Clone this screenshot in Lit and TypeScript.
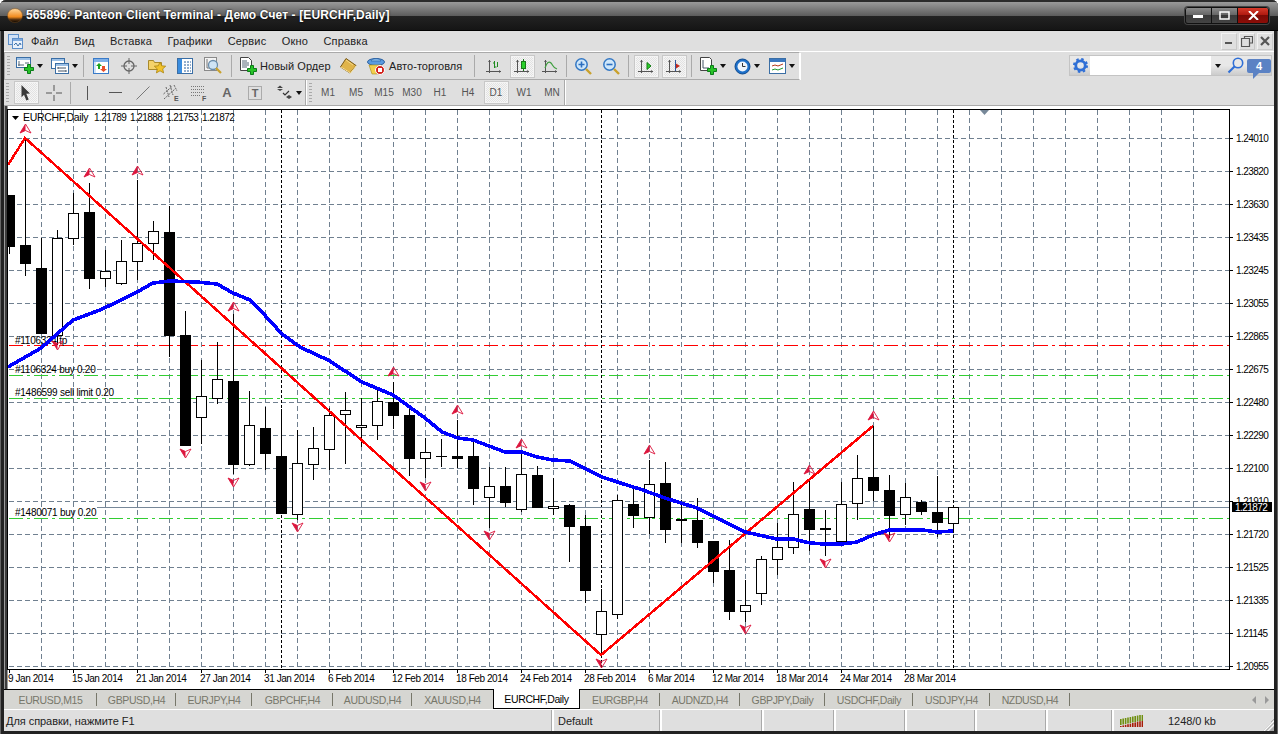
import { LitElement, html, css, svg } from "lit";
import { customElement } from "lit/decorators.js";

type C = [number, number, number, number, number, number];
// x, high, low, bodyTop, bodyBottom, white(1)/black(0)
const CANDLES: C[] = [
  [9,195,254,195,247,0],[25,138,276,245,264,0],[41,238,334,268,334,0],[57,230,345,238,335,1],[73,193,245,213,238,1],
  [89,183,289,212,279,0],[105,250,287,271,278,1],[121,240,285,261,283,1],[137,180,280,243,261,1],[153,221,260,231,243,1],
  [169,206,357,232,336,0],[185,311,446,335,446,0],[201,360,444,396,417,1],[217,342,404,379,398,1],[233,314,474,381,465,0],
  [249,391,466,425,464,1],[265,407,470,428,454,0],[281,409,514,456,514,0],[297,430,520,463,514,1],[313,427,480,448,464,1],
  [329,408,470,415,449,1],[345,392,464,410,414,1],[361,398,447,425,427,1],[377,390,440,401,425,1],[393,382,429,402,416,0],
  [409,405,476,415,459,0],[425,438,478,452,458,1],[441,439,467,456,457,0],[457,420,468,456,459,0],[473,441,505,456,489,0],
  [489,467,528,486,497,1],[505,467,507,486,503,0],[521,451,512,474,509,1],[537,466,508,475,508,0],[553,478,515,506,508,1],
  [569,504,562,505,527,0],[585,515,603,526,591,0],[601,589,655,611,634,1],[617,495,619,500,614,1],[633,489,528,504,516,0],
  [649,460,534,484,517,1],[665,462,543,483,530,0],[681,500,543,519,521,0],[697,498,548,520,543,0],[713,541,583,541,572,0],
  [729,540,620,570,612,0],[745,580,622,605,611,1],[761,556,605,559,593,1],[777,523,575,547,559,1],[793,482,554,514,547,1],
  [809,481,551,509,530,0],[825,510,556,528,530,0],[841,482,544,504,541,1],[857,455,520,478,503,1],[873,426,501,477,491,0],
  [889,475,538,490,516,0],[905,483,525,497,514,1],[921,500,515,502,512,0],[937,476,537,512,523,0],[953,507,531,507,523,1],
];
const BLUE = "8,367 41,348 73,320 100,310 117,302 137,292 153,283 170,281 197,282 217,284 233,293 250,300 260,310 282,334 300,347 317,355 328,360 362,382 393,395 425,418 442,432 458,438 473,440 505,452 522,452 537,457 553,460 570,461 602,477 633,487 640,489 665,498 697,508 715,517 745,532 777,539 793,539 810,543 825,544 842,544 857,542 873,535 889,530 923,530 937,532 953,531";
const UPS = [[25,129],[89,173],[137,171],[233,307],[393,372],[457,410],[521,444],[649,450],[809,470],[873,416]];
const DOWNS = [[57,345],[185,453],[233,482],[297,527],[425,486],[489,535],[601,663],[745,629],[825,563],[889,537]];
const PRICES = ["1.24010","1.23820","1.23630","1.23435","1.23245","1.23055","1.22865","1.22675","1.22480","1.22290","1.22100","1.21910","1.21720","1.21525","1.21335","1.21145","1.20955"];
const DATES = ["9 Jan 2014","15 Jan 2014","21 Jan 2014","27 Jan 2014","31 Jan 2014","6 Feb 2014","12 Feb 2014","18 Feb 2014","24 Feb 2014","28 Feb 2014","6 Mar 2014","12 Mar 2014","18 Mar 2014","24 Mar 2014","28 Mar 2014"];
const TABS = ["EURUSD,M15","GBPUSD,H4","EURJPY,H4","GBPCHF,H4","AUDUSD,H4","XAUUSD,H4","EURCHF,Daily","EURGBP,H4","AUDNZD,H4","GBPJPY,Daily","USDCHF,Daily","USDJPY,H4","NZDUSD,H4"];
const MENU = ["Файл","Вид","Вставка","Графики","Сервис","Окно","Справка"];
const TF = ["M1","M5","M15","M30","H1","H4","D1","W1","MN"];

const range = (n: number) => Array.from({ length: n }, (_, i) => i);

const plus = (x = 0, y = 0) => svg`<path transform="translate(${x} ${y})" d="M3.5 .5h3v3h3v3h-3v3h-3v-3h-3v-3h3z" fill="#27c427" stroke="#0b7d1a"/>`;
const axes = svg`<path d="M3.5 1v13M0 12.5h15" stroke="#555" fill="none"/><path d="M2 3l1.500-2l1.500 2zM13 11l2 1.500l-2 1.500z" fill="#555"/>`;
const ic = (w: number, h: number, body: unknown) => html`<svg width=${w} height=${h} viewBox="0 0 ${w} ${h}" class="ic">${body}</svg>`;

const icons: Record<string, unknown> = {
  newChart: ic(18, 18, svg`<rect x=".5" y=".5" width="14" height="10" fill="#fff" stroke="#3a6ea5"/><rect x="1" y="1" width="13" height="2" fill="#9cc0e6"/><path d="M3 4v5M2 8h6M9 6h4" stroke="#567"/>${plus(8, 7)}`),
  profile: ic(18, 17, svg`<rect x=".5" y=".5" width="13" height="10" fill="#fff" stroke="#3a6ea5"/><rect x="1" y="1" width="12" height="2" fill="#9cc0e6"/><rect x="4.500" y="5.500" width="13" height="10" fill="#fff" stroke="#3a6ea5"/><rect x="5" y="6" width="12" height="2" fill="#9cc0e6"/><path d="M7 10h8M7 13h8M7 9v2M15 12v2" stroke="#456"/>`),
  market: ic(16, 16, svg`<rect x=".5" y=".5" width="15" height="15" fill="#fff" stroke="#3a7bc8"/><rect x="1" y="1" width="14" height="3" fill="#7fb0e8"/><rect x="1" y="4" width="2" height="11" fill="#cfe2f7"/><path d="M6 5l3 3h-2v3h-2v-3h-2z" fill="#1da31d"/><path d="M9 8h3v3h2l-3.500 3l-3.500-3h2z" fill="#e8502a"/>`),
  cross: ic(16, 16, svg`<circle cx="8" cy="8" r="5" fill="none" stroke="#666" stroke-width="1.300"/><path d="M8 0v6M8 10v6M0 8h6M10 8h6" stroke="#666"/>`),
  star: ic(18, 18, svg`<path d="M.5 3.500h5l1 2h7v7h-13z" fill="#f4d26a" stroke="#a88a2c"/><path d="M12 5l1.700 3.800 4 .4-3 2.700.9 4-3.600-2.100-3.600 2.100.9-4-3-2.700 4-.4z" fill="#f2c32c" stroke="#a98412" stroke-width=".8"/>`),
  term: ic(16, 16, svg`<rect x=".5" y=".5" width="15" height="15" fill="#fff" stroke="#3a6ea5"/><rect x="1" y="1" width="4" height="14" fill="#3a8ddf"/><path d="M7 4h7M7 7h7M7 10h7M7 13h7" stroke="#2b5f9a" stroke-dasharray="2 1"/>`),
  mag: ic(18, 18, svg`<rect x=".5" y=".5" width="12" height="13" fill="#f4f4f4" stroke="#8a8a8a"/><path d="M3 2v9h7" stroke="#777" fill="none"/><circle cx="9" cy="8" r="4.500" fill="#cfe4f5" stroke="#6a8dab" stroke-width="1.300"/><path d="M12 11l5 5" stroke="#c9a12c" stroke-width="2.200"/>`),
  order: ic(17, 18, svg`<path d="M.5 .5h8l3 3v10h-11z" fill="#fff" stroke="#444"/><path d="M2 4h5M2 6h7M2 8h7M2 10h5" stroke="#567"/>${plus(7, 8)}`),
  book: ic(17, 16, svg`<path d="M6 .5l10 7-6 7.500-9.500-6z" fill="#e0b44a" stroke="#7a5a16"/><path d="M1 9l9.500 6 5.500-7" fill="none" stroke="#fbe39a"/><path d="M6 2l7 5" stroke="#f4d98a"/>`),
  hat: ic(19, 18, svg`<ellipse cx="9" cy="5" rx="8.500" ry="3.500" fill="#5a9be0" stroke="#2a5f9f"/><path d="M4 4c1-3 9-3 10 0z" fill="#8cc0f0" stroke="#2a5f9f" stroke-width=".6"/><path d="M2 8h12l2 4-4 5H5z" fill="#f2cf4c" stroke="#a58a1f" stroke-width=".6"/><circle cx="13" cy="13" r="4.500" fill="#d2201a" stroke="#fff"/><rect x="11" y="11" width="4" height="4" fill="#fff"/>`),
  bars: ic(16, 15, svg`${axes}<path d="M8.500 2v7M8.500 4h-1.500M8.500 8h2M11.500 3v5" stroke="#1f8a1f" fill="none"/>`),
  candle: ic(16, 15, svg`${axes}<path d="M9.500 0v12" stroke="#1a7a1a"/><rect x="7.500" y="2.500" width="4" height="7" fill="#2bd12b" stroke="#1a7a1a"/>`),
  line: ic(16, 15, svg`${axes}<path d="M3 9c2-6 4-7 6-5s2 5 6 6" fill="none" stroke="#3f9f3f" stroke-width="1.200"/>`),
  zoomIn: ic(17, 17, svg`<circle cx="6.500" cy="6.500" r="5.700" fill="#cfe7fa" stroke="#3478c4" stroke-width="1.500"/><path d="M3.500 6.500h6M6.500 3.500v6" stroke="#2c6fc0" stroke-width="1.600"/><path d="M11 11l5 5" stroke="#c9a12c" stroke-width="2.400"/>`),
  zoomOut: ic(17, 17, svg`<circle cx="6.500" cy="6.500" r="5.700" fill="#cfe7fa" stroke="#3478c4" stroke-width="1.500"/><path d="M3.500 6.500h6" stroke="#2c6fc0" stroke-width="1.600"/><path d="M11 11l5 5" stroke="#c9a12c" stroke-width="2.400"/>`),
  scroll: ic(16, 15, svg`${axes}<path d="M9 3.500l4 3.500-4 3.500z" fill="#2bd12b" stroke="#127a12"/>`),
  shift: ic(16, 15, svg`${axes}<path d="M9.500 1v11" stroke="#33559a"/><path d="M14 7l-4-2.500v5z" fill="#c5281c"/>`),
  addInd: ic(17, 18, svg`<path d="M.5 .5h9l2 2v11h-11z" fill="#fff" stroke="#444"/><path d="M3 3v8h6" stroke="#456" fill="none"/>${plus(7, 8)}`),
  clock: ic(17, 17, svg`<circle cx="8.500" cy="8.500" r="7.500" fill="#1c6fc9" stroke="#0e4a8f"/><circle cx="8.500" cy="8.500" r="5" fill="#eef4fb"/><path d="M8.500 5v3.500h3" stroke="#333" fill="none"/>`),
  tpl: ic(17, 16, svg`<rect x=".5" y=".5" width="16" height="15" fill="#fff" stroke="#3a6ea5"/><rect x="1" y="1" width="15" height="3" fill="#3a78c0"/><path d="M3 8l3-1 3 1 5-2" stroke="#b43a1c" fill="none"/><path d="M3 12l3-1 3 1 5-2" stroke="#1f9a2e" fill="none"/>`),
  arrow: ic(12, 18, svg`<path d="M1.500 1l8.500 8.500-3.700.3 2.400 5.700-2.300 1-2.400-5.700-2.500 2.500z" fill="#3a3a3a"/>`),
  crossTool: ic(16, 16, svg`<path d="M8 0v6M8 10v6M0 8h6M10 8h6" stroke="#555"/>`),
  vline: ic(3, 14, svg`<path d="M1.500 0v14" stroke="#555"/>`),
  hline: ic(13, 3, svg`<path d="M0 1.500h13" stroke="#555"/>`),
  trend: ic(14, 14, svg`<path d="M.5 13.500l13-13" stroke="#777"/>`),
  channel: ic(16, 16, svg`<path d="M.5 9l9-8M1 14l11-10M3 2l3 10M7 0l3 10M11 0l3 6" stroke="#666" stroke-dasharray="2 1" fill="none"/><text x="11" y="15.500" class="mini">E</text>`),
  fibo: ic(16, 16, svg`<path d="M0 1.500h14M0 4.500h14M0 7.500h14M0 10.500h10" stroke="#777" stroke-dasharray="1 1"/><text x="11" y="15.500" class="mini">F</text>`),
  tbox: ic(14, 14, svg`<rect x=".5" y=".5" width="13" height="13" fill="none" stroke="#777" stroke-dasharray="1 1"/><text x="7" y="11" text-anchor="middle" class="big">T</text>`),
  mixed: ic(16, 15, svg`<path d="M3 .5l3 2.500h-6zM3 6l3-2h-6z" fill="#444"/><path d="M6 8l2 2 4-4" stroke="#333" fill="none" stroke-width="1.200"/><path d="M12 10l3 2-3 2-3-2z" fill="#444"/>`),
  gear: ic(15, 15, svg`<circle cx="7.500" cy="7.500" r="4.700" fill="none" stroke="#2f6fd6" stroke-width="2.800"/><circle cx="7.500" cy="7.500" r="6.500" fill="none" stroke="#2f6fd6" stroke-width="2" stroke-dasharray="2.500 2.600"/><circle cx="7.500" cy="7.500" r="2" fill="#dfe8f5"/>`),
  search: ic(17, 17, svg`<circle cx="11" cy="6" r="4.700" fill="none" stroke="#2f6fd6" stroke-width="1.600"/><path d="M7.500 9.500l-6 6" stroke="#2f6fd6" stroke-width="2.200"/>`),
  logo: ic(15, 15, svg`<rect x=".5" y=".5" width="10" height="10" fill="#cfe0f5" stroke="#5d8fc9"/><rect x="4.500" y="4.500" width="10" height="10" fill="#e9f1fb" stroke="#5d8fc9"/><rect x="5" y="5" width="9" height="2" fill="#7ea9dc"/><path d="M6 11l2-2 2 3 2-3 1 2" stroke="#3a6ea5" fill="none"/>`),
  globe: ic(16, 15, svg`<defs><linearGradient id="gl" x1="0" y1="0" x2="0" y2="1"><stop offset="0" stop-color="#ffd9a0"/><stop offset=".6" stop-color="#f08a1d"/><stop offset=".78" stop-color="#5a3410"/><stop offset="1" stop-color="#000"/></linearGradient></defs><ellipse cx="8" cy="7.500" rx="7.500" ry="7" fill="url(#gl)" stroke="#7a4a18" stroke-width=".5"/>`),
  status: ic(23, 12, svg`${range(10).map((i) => svg`<rect x=${i * 2.4} y="0" width="1.600" height="6" fill="#6f8f10" transform="translate(0 ${Math.max(0, 4 - i * .5)})"/><rect x=${i * 2.4} y=${Math.max(6, 11 - i * .6)} width="1.600" height="8" fill="#a81c08"/>`)}`),
};

const chart = () => {
  const grid = svg`
    ${range(37).map((i) => { const x = 41 + i * 32; return svg`<path d="M${x + .5} 110V669" class="grid"/>`; })}
    ${PRICES.map((_, i) => svg`<path d="M9 ${138.5 + i * 33}H1229" class="grid"/>`)}
    ${[281, 601, 953].map((x) => svg`<path d="M${x + .5} 110V669" class="sepl"/>`)}
    <path d="M9 345.500H1229" class="dd" stroke="#ff0000"/>
    <path d="M9 375.500H1229" class="dd" stroke="#32cd32"/>
    <path d="M9 398.500H1229" class="dd" stroke="#32cd32"/>
    <path d="M9 518.500H1229" class="dd" stroke="#32cd32"/>
    <path d="M97 507.500H1229" stroke="#778899" shape-rendering="crispEdges"/>`;
  const candles = CANDLES.map(([x, hi, lo, t, b, w]) => svg`
    <rect x=${x} y=${hi} width="1" height=${lo - hi} fill="#000" shape-rendering="crispEdges"/>
    ${w
      ? svg`<rect x=${x - 4.5} y=${t + .5} width="10" height=${b - t} fill="#fff" stroke="#000" shape-rendering="crispEdges"/>`
      : svg`<rect x=${x - 5} y=${t} width="11" height=${Math.max(b - t, 1)} fill="#000" shape-rendering="crispEdges"/>`}`);
  const labels = svg`
    <text x="15" y="344" class="t lab">#1106324 tp</text>
    <text x="15" y="373" class="t lab">#1106324 buy 0.20</text>
    <text x="15" y="396" class="t lab">#1486599 sell limit 0.20</text>
    <text x="15" y="516" class="t lab">#1480071 buy 0.20</text>`;
  const lines = svg`
    <polyline points="8,165 25,138 601,655 873,426" fill="none" stroke="#ff0000" stroke-width="2.500" shape-rendering="crispEdges"/>
    <polyline points=${BLUE} fill="none" stroke="#0000ff" stroke-width="3.600" shape-rendering="crispEdges"/>`;
  const arrow = (cx: number, cy: number, s: number) => svg`<g transform="translate(${cx + .5} ${cy}) scale(1 ${s})">
      <path d="M0-5L-5.500 4L0 1.500z" fill="#dc143c"/><path d="M0-5L5.500 4L0 1.500L-5.500 4z" fill="none" stroke="#dc143c" stroke-width=".9"/></g>`;
  return html`<svg class="chart" width="1270" height="583" viewBox="4 106 1270 583">
    <rect x="4" y="106" width="1270" height="583" fill="#fff"/>
    <rect x="4" y="106" width="4" height="583" fill="#9a9a9a"/>
    <rect x="5" y="106" width="2" height="583" fill="#3c3c3c"/>
    <clipPath id="plot"><rect x="8" y="110" width="1221" height="559"/></clipPath>
    <g clip-path="url(#plot)">${grid}${candles}${labels}${lines}
      ${UPS.map(([x, y]) => arrow(x, y, 1))}${DOWNS.map(([x, y]) => arrow(x, y, -1))}
    </g>
    <path d="M7.500 109.500H1229.500V669.500H7.500Z" fill="none" stroke="#000" shape-rendering="crispEdges"/>
    <path d="M12 116h7l-3.500 4z" fill="#000"/>
    <text x="23" y="121" class="t hd">EURCHF,Daily</text>
    ${["1.21789", "1.21888", "1.21753", "1.21872"].map((p, i) => svg`<text x=${94 + i * 36} y="121" class="t px">${p}</text>`)}
    <path d="M980 110h9l-4.500 5z" fill="#778899"/>
    ${PRICES.map((p, i) => svg`<path d="M1230 ${138.5 + i * 33}h3" stroke="#000" shape-rendering="crispEdges"/><text x="1236" y=${142 + i * 33} class="t px">${p}</text>`)}
    <rect x="1232" y="502" width="40" height="10" fill="#000"/>
    <text x="1235" y="511" class="t px" fill="#fff">1.21872</text>
    ${DATES.map((d, i) => { const x = 9 + i * 64; return svg`<path d="M${x + .5} 670v3" stroke="#000" shape-rendering="crispEdges"/><text x=${x - 1} y="682" class="t dt">${d}</text>`; })}
  </svg>`;
};

@customElement("app-root")
export class AppRoot extends LitElement {
  static styles = css`
    :host { display: block; width: 1278px; height: 734px; font: 11px "Liberation Sans", Arial, sans-serif; color: #222; overflow: hidden; }
    .win { height: 734px; box-sizing: border-box; background: #222; display: flex; flex-direction: column; padding: 0 4px 4px; box-shadow: inset 1px 0 #666, inset -1px 0 #666; border-radius: 6px 6px 0 0; }
    .title { height: 31px; flex: none; margin: 0 -4px; padding: 0 9px 0 7px; display: flex; align-items: center; background: linear-gradient(#2b2b2b 0 2px, #9a9a9a 2px, #5c5c5c 16px, #232323 16px, #141414 31px); border-radius: 6px 6px 0 0; color: #fff; font-weight: bold; font-size: 12px; letter-spacing: .12px; text-shadow: 0 0 2px #000; box-sizing: border-box; border-bottom: 1px solid #000; }
    .title > .ic { margin-right: 3px; }
    .wbtns { margin-left: auto; display: flex; height: 15px; border: 1px solid #111; border-radius: 3px; overflow: hidden; box-shadow: 0 0 0 1px #444; }
    .wb { width: 25px; display: flex; align-items: center; justify-content: center; background: linear-gradient(#8a8a8a, #666 45%, #3a3a3a 50%, #444); border-right: 1px solid #111; }
    .wb.close { width: 30px; border-right: 0; background: linear-gradient(#d63a2a, #b01a10 45%, #7c0a05 50%, #8c0e08); }
    .menu { flex: none; background: #dfdfdf; border-bottom: 1px solid #fff; display: flex; align-items: center; box-sizing: border-box; height: 21px; }
    .menu > .ic { margin: 0 8px 0 4px; }
    .mi { margin-right: 15.500px; letter-spacing: .15px; }
    .mdi { margin-left: auto; display: flex; gap: 2px; margin-right: 1px; }
    .mb { width: 16px; height: 17px; border: 1px solid #f2f2f2; border-right-color: #c8c8c8; border-bottom-color: #c8c8c8; box-sizing: border-box; display: flex; align-items: center; justify-content: center; }
    .row { display: flex; background: #dfdfdf; flex: none; box-sizing: border-box; }
    .r1 { height: 28px; }
    .r2 { height: 26px; border-bottom: 1px solid #aaa; }
    .bar { display: flex; align-items: center; box-sizing: border-box; border-right: 1px solid #fff; }
    .r1 .bar { width: 796px; border-top: 1px solid #aaa; border-left: 1px solid #aaa; border-bottom: 1px solid #aaa; box-shadow: 1px 1px 0 #fff; }
    .r2 .b1 { width: 302px; border-right: 1px solid #aaa; box-shadow: 1px 0 #fff; }
    .r2 .b2 { width: 258px; border-right: 1px solid #aaa; box-shadow: 1px 0 #fff; margin-left: 1px; }
    .r2 .b2 .grip { width: 7px; }
    .grip { width: 8px; height: 20px; flex: none; background: repeating-linear-gradient(#aaa 0 1px, transparent 1px 3px) 2px 0 / 3px 100% no-repeat; }
    .b { width: 28px; height: 24px; flex: none; display: flex; align-items: center; justify-content: center; box-sizing: border-box; font-size: 10px; color: #555; }
    .active > span { width: 25px; height: 23px; display: flex; align-items: center; justify-content: center; box-sizing: border-box; border: 1px solid #c8c8c8; outline: 1px solid #f4f4f4; outline-offset: -2px; background: repeating-conic-gradient(#e2e2e2 0 25%, #f5f5f5 0 50%) 0 0 / 2px 2px; }
    .d { height: 24px; flex: none; display: flex; align-items: center; gap: 3px; box-sizing: border-box; }
    .caret { width: 0; height: 0; border: 3px solid transparent; border-top: 4px solid #111; border-bottom: 0; }
    .sep { flex: none; height: 22px; width: 1px; background: #aaa; }
    .tb { height: 24px; flex: none; display: flex; align-items: center; gap: 3px; font-size: 11px; letter-spacing: .05px; color: #222; box-sizing: border-box; white-space: nowrap; }
    .searchbox { margin: 3px 2px 0 auto; height: 21px; width: 203px; display: flex; border: 1px solid #c4c4c4; box-sizing: border-box; background: linear-gradient(#e8e8e8 50%, #ccc); align-items: center; }
    .searchbox .g { width: 20px; display: flex; justify-content: center; }
    .searchbox .in { width: 121px; height: 19px; background: #fff; }
    .searchbox .dd { width: 14px; display: flex; justify-content: center; }
    .searchbox .s { width: 21px; display: flex; justify-content: center; }
    .chat { margin-left: 1px; width: 24px; height: 14px; background: #5b82c4; color: #fff; font: bold 11px "Liberation Sans", sans-serif; text-align: center; line-height: 14px; border-radius: 2px; position: relative; }
    .chat::after { content: ""; position: absolute; left: 6px; top: 14px; border: 3px solid transparent; border-top-color: #5b82c4; border-left-color: #5b82c4; }
    .chart { display: block; flex: none; }
    .t { font-family: "Liberation Sans", Arial, sans-serif; fill: #000; }
    .t.px[fill] { fill: #fff; }
    .px { font-size: 10px; letter-spacing: -.55px; }
    .dt { font-size: 10px; letter-spacing: -.42px; }
    .lab { font-size: 10px; letter-spacing: -.26px; }
    .hd { font-size: 10.500px; letter-spacing: -.3px; }
    .mini { font: bold 7px "Liberation Sans", sans-serif; fill: #555; }
    .big { font: bold 11px "Liberation Sans", sans-serif; fill: #666; }
    .grid { stroke: #708090; stroke-dasharray: 5 3; shape-rendering: crispEdges; fill: none; }
    .sepl { stroke: #000; stroke-dasharray: 3 2; shape-rendering: crispEdges; fill: none; }
    .dd { stroke-dasharray: 14 4 3 4; shape-rendering: crispEdges; fill: none; }
    .tabs { height: 20px; flex: none; display: grid; grid-template-columns: 93px 79px 76px 81px 79px 81px 87px 80px 80px 85px 88px 77px 80px 1fr; background: #d6d6d2; border-top: 1px solid #000; box-sizing: border-box; color: #77776a; font-size: 10.500px; }
    .tab { display: flex; align-items: center; justify-content: center; position: relative; letter-spacing: -.38px; }
    .tab::after { content: ""; position: absolute; right: 0; top: 3px; bottom: 3px; width: 1px; background: #77776a; }
    .tab.on { background: #fff; color: #000; border: 1px solid #000; border-top: 0; margin-top: -1px; }
    .tab.on::after, .tab.pre::after { display: none; }
    .tabnav { display: flex; align-items: center; justify-content: flex-end; gap: 9px; padding-right: 5px; }
    .tl, .tr { width: 0; height: 0; border: 4px solid transparent; }
    .tl { border-right: 4px solid #999; border-left: 0; }
    .tr { border-left: 4px solid #999; border-right: 0; }
    .status { flex: none; height: 22px; display: grid; grid-template-columns: 550px 108px 102px 72px 71px 70px 71px 66px 1fr; background: #dfdfdf; border-top: 1px solid #fff; box-sizing: border-box; letter-spacing: -.05px; }
    .sc { display: flex; align-items: center; padding-left: 2px; box-sizing: border-box; border-right: 2px solid #fff; box-shadow: inset -1px 0 #aaa; }
    .sc.def { padding-left: 4px; }
    .sc.nb { border: 0; box-shadow: none; padding-left: 6px; gap: 25px; position: relative; }
    .corner { position: absolute; right: 0; bottom: 0; width: 12px; height: 12px; background: linear-gradient(135deg, transparent 50%, #aaa 50%, #fff 58%, #aaa 66%, #fff 74%, #aaa 82%); }
  `;

  private btn(name: string, active = false) {
    return html`<div class="b ${active ? "active" : ""}">${active ? html`<span>${icons[name]}</span>` : icons[name]}</div>`;
  }
  private drop(name: string, w: number, pl: number) {
    return html`<div class="d" style="width:${w}px;padding-left:${pl}px">${icons[name]}<i class="caret"></i></div>`;
  }
  private sep(w: number) {
    return html`<div style="width:${w}px;display:flex;justify-content:center;flex:none"><div class="sep"></div></div>`;
  }

  render() {
    return html`<div class="win">
      <div class="title">${icons.globe}<span>565896: Panteon Client Terminal - Демо Счет - [EURCHF,Daily]</span>
        <div class="wbtns">
          <div class="wb">${ic(11, 5, svg`<rect y="2" width="10" height="3" fill="#fff"/>`)}</div>
          <div class="wb">${ic(11, 9, svg`<rect x="1" y="1" width="9" height="7" fill="none" stroke="#fff" stroke-width="1.500"/>`)}</div>
          <div class="wb close">${ic(11, 9, svg`<path d="M1 0l9 9M10 0L1 9" stroke="#fff" stroke-width="2"/>`)}</div>
        </div>
      </div>
      <div class="menu">${icons.logo}${MENU.map((m) => html`<span class="mi">${m}</span>`)}
        <div class="mdi">
          <div class="mb">${ic(8, 8, svg`<rect y="5" width="7" height="2" fill="#555"/>`)}</div>
          <div class="mb">${ic(12, 11, svg`<path d="M3.500 2.500V.5H11.500V7H8.500M.5 2.500H8.500V10.500H.5Z" fill="none" stroke="#555" stroke-width="1.200"/>`)}</div>
          <div class="mb">${ic(10, 10, svg`<path d="M1 1l8 8M9 1L1 9" stroke="#555" stroke-width="2.200"/>`)}</div>
        </div>
      </div>
      <div class="row r1">
        <div class="bar">
          <div class="grip"></div>
          ${this.drop("newChart", 32, 3)}${this.drop("profile", 34, 6)}
          ${this.sep(8)}
          ${this.btn("market")}${this.btn("cross")}${this.btn("star")}${this.btn("term")}${this.btn("mag")}
          ${this.sep(8)}
          <div class="tb" style="width:99px;padding-left:5px">${icons.order}<span>Новый Ордер</span></div>
          ${this.btn("book")}
          <div class="tb" style="width:106px;padding-left:5px">${icons.hat}<span>Авто-торговля</span></div>
          ${this.sep(12)}
          ${this.btn("bars")}${this.btn("candle", true)}${this.btn("line")}
          ${this.sep(5)}
          ${this.btn("zoomIn")}${this.btn("zoomOut")}
          ${this.sep(7)}
          ${this.btn("scroll", true)}${this.btn("shift", true)}
          ${this.sep(7)}
          ${this.drop("addInd", 36, 5)}${this.drop("clock", 34, 3)}${this.drop("tpl", 34, 4)}
        </div>
        <div class="searchbox">
          <div class="g">${icons.gear}</div><div class="in"></div>
          <div class="dd"><i class="caret"></i></div>
          <div class="s">${icons.search}</div>
          <div class="chat">4</div>
        </div>
      </div>
      <div class="row r2">
        <div class="bar b1">
          <div class="grip"></div>
          <div class="b active" style="width:28px"><span>${icons.arrow}</span></div>
          ${this.btn("crossTool")}
          ${this.sep(5)}
          ${this.btn("vline")}${this.btn("hline")}${this.btn("trend")}${this.btn("channel")}${this.btn("fibo")}
          <div class="b"><b style="font-size:13px;color:#666">A</b></div>
          ${this.btn("tbox")}
          ${this.drop("mixed", 33, 8)}
        </div>
        <div class="bar b2">
          <div class="grip"></div>
          ${TF.map((t) => html`<div class="b ${t === "D1" ? "active" : ""}">${t === "D1" ? html`<span>${t}</span>` : t}</div>`)}
        </div>
      </div>
      ${chart()}
      <div class="tabs">
        ${TABS.map((t, i) => html`<div class="tab ${t === "EURCHF,Daily" ? "on" : ""} ${i === 5 ? "pre" : ""}">${t}</div>`)}
        <div class="tabnav"><i class="tl"></i><i class="tr"></i></div>
      </div>
      <div class="status">
        <div class="sc">Для справки, нажмите F1</div>
        <div class="sc def">Default</div>
        <div class="sc"></div><div class="sc"></div><div class="sc"></div><div class="sc"></div><div class="sc"></div><div class="sc"></div>
        <div class="sc nb">${icons.status}<span>1248/0 kb</span><i class="corner"></i></div>
      </div>
    </div>`;
  }
}
